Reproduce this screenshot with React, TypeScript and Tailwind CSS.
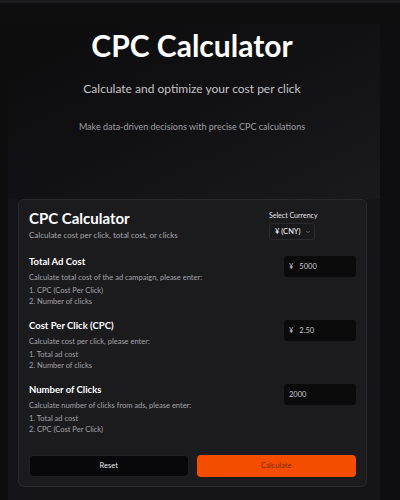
import React from 'react';

const font = { fontFamily: 'Lato, "Open Sans", sans-serif' };

interface SectionProps {
  title: string;
  desc: string;
  items: string[];
  prefix?: string;
  value: string;
}

const Section: React.FC<SectionProps> = ({ title, desc, items, prefix, value }) => (
  <div className="flex justify-between">
    <div className="flex flex-col">
      <div className="text-[9.5px] font-bold text-white leading-[14px]">{title}</div>
      <div className="mt-[3px] text-[7.5px] text-[#a3a3a8] leading-[11px]">{desc}</div>
      <div className="mt-[2px] text-[7.5px] text-[#a3a3a8] leading-[11px]">{items[0]}</div>
      <div className="text-[7.5px] text-[#a3a3a8] leading-[11px]">{items[1]}</div>
    </div>
    <div className="mt-[1px] w-[72px] h-[21px] rounded-[3px] bg-[#0b0b0c] flex items-center px-[5px] gap-[6px] text-[7.5px] text-[#c8c8cc]">
      {prefix && <span>{prefix}</span>}
      <span>{value}</span>
    </div>
  </div>
);

const App: React.FC = () => {
  return (
    <div className="w-[400px] h-[500px] bg-[#0d0d0e] overflow-hidden" style={font}>
      {/* top strip */}
      <div className="h-[3px] bg-[#1c1c1e]" />
      <div className="h-[21px] bg-[#0e0e0f]" />

      <div className="flex">
        <div className="w-[8px] bg-[#0d0d0e]" />
        <div className="w-[372px] flex flex-col bg-[#151517]">
          {/* Hero */}
          <div className="h-[175px] bg-gradient-to-br from-[#0c0c0d] via-[#111113] to-[#1a1a1c] flex flex-col items-center pt-[1px] pr-[4px]">
            <h1 className="text-[30px] font-bold text-white leading-[40px]">CPC Calculator</h1>
            <p className="mt-[15px] text-[12px] text-[#c4c4c8] leading-[18px]">Calculate and optimize your cost per click</p>
            <p className="mt-[22px] text-[9px] text-[#9d9da2] leading-[14px]">Make data-driven decisions with precise CPC calculations</p>
          </div>

          {/* Card */}
          <div className="ml-[10px] w-[349px] h-[288px] rounded-[6px] border border-[#2a2a2e] bg-[#1b1b1e] px-[10px] pt-[8px] flex flex-col">
            <div className="flex justify-between">
              <div className="flex flex-col">
                <div className="text-[15px] font-bold text-white leading-[20px]">CPC Calculator</div>
                <div className="mt-[2px] text-[8px] text-[#a8a8ad] leading-[11px]">Calculate cost per click, total cost, or clicks</div>
              </div>
              <div className="w-[46px] flex flex-col mr-[41px] mt-[2px]">
                <div className="text-[7px] text-[#e4e4e7] leading-[10px] whitespace-nowrap">Select Currency</div>
                <div className="mt-[3px] w-[46px] h-[17px] rounded-[3px] border border-[#2a2a2e] bg-[#19191c] flex items-center pl-[5px] gap-[4px] text-[7.5px] text-white">
                  <span>¥ (CNY)</span>
                  <svg width="6" height="6" viewBox="0 0 24 24" fill="none" stroke="#8a8a90" strokeWidth="2.5" strokeLinecap="round" strokeLinejoin="round">
                    <path d="m6 9 6 6 6-6" />
                  </svg>
                </div>
              </div>
            </div>

            <div className="mt-[14px] flex flex-col gap-[12px]">
              <Section
                title="Total Ad Cost"
                desc="Calculate total cost of the ad campaign, please enter:"
                items={['1. CPC (Cost Per Click)', '2. Number of clicks']}
                prefix="¥"
                value="5000"
              />
              <Section
                title="Cost Per Click (CPC)"
                desc="Calculate cost per click, please enter:"
                items={['1. Total ad cost', '2. Number of clicks']}
                prefix="¥"
                value="2.50"
              />
              <Section
                title="Number of Clicks"
                desc="Calculate number of clicks from ads, please enter:"
                items={['1. Total ad cost', '2. CPC (Cost Per Click)']}
                value="2000"
              />
            </div>

            <div className="mt-[20px] flex gap-[8px]">
              <button className="w-[160px] h-[22px] rounded-[4px] bg-[#08080a] border border-[#1f1f22] text-[7.5px] text-[#e4e4e7]">
                Reset
              </button>
              <button className="w-[160px] h-[22px] rounded-[4px] bg-[#f44d00] text-[7.5px] text-[#7e2900]">
                Calculate
              </button>
            </div>
          </div>
        </div>
        <div className="w-[20px] h-[476px] bg-[#0e0e10]" />
      </div>
    </div>
  );
};

export default App;
